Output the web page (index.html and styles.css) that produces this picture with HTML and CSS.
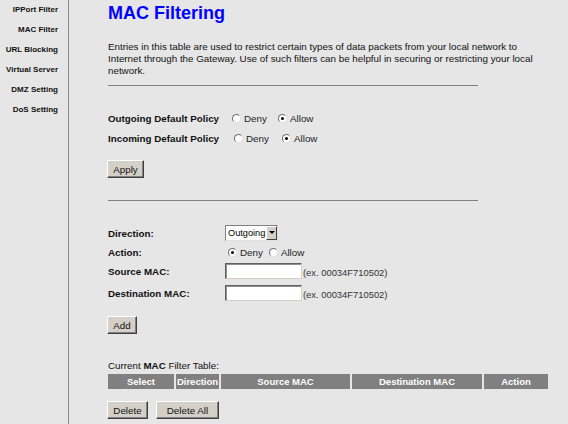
FILE: index.html
```html
<!DOCTYPE html>
<html>
<head>
<meta charset="utf-8">
<title>MAC Filtering</title>
<link rel="stylesheet" href="styles.css">
</head>
<body>
<div class="page">
  <nav class="sidebar">
    <a class="nav-item">IPPort Filter</a>
    <a class="nav-item">MAC Filter</a>
    <a class="nav-item">URL Blocking</a>
    <a class="nav-item">Virtual Server</a>
    <a class="nav-item">DMZ Setting</a>
    <a class="nav-item">DoS Setting</a>
  </nav>
  <main class="main">
    <h1 class="title">MAC Filtering</h1>
    <p class="intro">Entries in this table are used to restrict certain types of data packets from your local network to Internet through the Gateway. Use of such filters can be helpful in securing or restricting your local network.</p>
    <div class="rule"></div>

    <div class="policy">
      <div class="policy-row">
        <span class="label">Outgoing Default Policy</span>
        <label class="opt opt-deny"><input type="radio" name="out" class="radio">Deny</label>
        <label class="opt"><input type="radio" name="out" class="radio" checked>Allow</label>
      </div>
      <div class="policy-row">
        <span class="label">Incoming Default Policy</span>
        <label class="opt opt-deny opt-in"><input type="radio" name="in" class="radio">Deny</label>
        <label class="opt"><input type="radio" name="in" class="radio" checked>Allow</label>
      </div>
    </div>
    <button class="btn btn-apply">Apply</button>
    <div class="rule rule-2"></div>

    <div class="form">
      <div class="form-row r-dir">
        <span class="label">Direction:</span>
        <span class="select-wrap"><select class="select"><option>Outgoing</option><option>Incoming</option></select><span class="select-arrow"></span></span>
      </div>
      <div class="form-row r-act">
        <span class="label">Action:</span>
        <span class="act">
          <label class="opt2"><input type="radio" name="act" class="radio" checked>Deny</label>
          <label class="opt2"><input type="radio" name="act" class="radio">Allow</label>
        </span>
      </div>
      <div class="form-row r-src">
        <span class="label">Source MAC:</span>
        <span class="field"><input type="text" class="text-in"><span class="hint">(ex. 00034F710502)</span></span>
      </div>
      <div class="form-row r-dst">
        <span class="label">Destination MAC:</span>
        <span class="field"><input type="text" class="text-in"><span class="hint">(ex. 00034F710502)</span></span>
      </div>
    </div>
    <button class="btn btn-add">Add</button>

    <div class="table-title">Current <b>MAC</b> Filter Table:</div>
    <table class="filter-table">
      <thead>
        <tr>
          <th class="c-sel">Select</th>
          <th class="c-dir">Direction</th>
          <th class="c-src">Source MAC</th>
          <th class="c-dst">Destination MAC</th>
          <th class="c-act">Action</th>
        </tr>
      </thead>
    </table>
    <div class="actions">
      <button class="btn btn-del">Delete</button>
      <button class="btn btn-delall">Delete All</button>
    </div>
  </main>
</div>
</body>
</html>
```

FILE: styles.css
```css
html, body {
  margin: 0;
  padding: 0;
  background: #e6e6e6;
}
body {
  font-family: "Liberation Sans", Arial, sans-serif;
  color: #000;
  width: 568px;
  height: 424px;
  overflow: hidden;
}
.page {
  display: flex;
  height: 424px;
}
.sidebar {
  width: 68px;
  border-right: 1px solid #8a8a8a;
  display: flex;
  flex-direction: column;
  align-items: flex-end;
  padding-top: 4px;
  box-sizing: content-box;
}
.nav-item {
  display: block;
  font-size: 8px;
  font-weight: bold;
  line-height: 12px;
  height: 20px;
  padding-right: 10px;
  color: #111;
  white-space: nowrap;
}
.main {
  padding-left: 39px;
  padding-top: 2px;
  flex: 1;
}
.title {
  margin: 0;
  font-size: 18px;
  line-height: 22px;
  color: #0000ff;
  font-weight: bold;
}
.intro {
  margin: 17px 0 0 0;
  width: 430px;
  font-size: 9.8px;
  line-height: 12px;
  color: #111;
}
.rule {
  width: 370px;
  height: 1px;
  background: #808080;
  margin-top: 8px;
}
.policy {
  margin-top: 22px;
}
.policy-row {
  display: flex;
  align-items: center;
  height: 20px;
}
.label {
  font-weight: bold;
  font-size: 9.8px;
  color: #111;
  white-space: nowrap;
}
.policy-row .label {
  width: 124px;
}
.opt {
  display: inline-flex;
  align-items: center;
  font-size: 9.8px;
  color: #222;
}
.opt-deny {
  width: 46px;
}
.opt-in {
  margin-left: 2px;
  width: 48px;
}
.radio {
  appearance: none;
  -webkit-appearance: none;
  width: 9px;
  height: 9px;
  margin: 0 3px 0 0;
  border-radius: 50%;
  background: #fff;
  border: 1px solid #707070;
  border-right-color: #e0e0e0;
  border-bottom-color: #e0e0e0;
  box-sizing: border-box;
  position: relative;
}
.radio:checked::after {
  content: "";
  position: absolute;
  left: 2px;
  top: 2px;
  width: 3px;
  height: 3px;
  border-radius: 50%;
  background: #000;
}
.btn {
  font-family: "Liberation Sans", Arial, sans-serif;
  font-size: 9.8px;
  height: 18px;
  padding: 0 5px;
  background: #d4d0c8;
  color: #111;
  border: 1px solid;
  border-color: #fff #404040 #404040 #fff;
  box-shadow: inset -1px -1px 0 #808080;
  display: block;
}
.btn-apply {
  margin: 12px 0 0 -1px;
  width: 37px;
}
.rule-2 {
  margin-top: 22px;
}
.form {
  margin-top: 23px;
}
.form-row {
  display: flex;
  align-items: center;
  height: 18px;
}
.form-row .label {
  width: 117px;
}
.r-act { margin-top: 1px; }
.r-src { margin-top: 1px; }
.r-dst { margin-top: 4px; }
.select-wrap {
  position: relative;
  display: inline-block;
  height: 16px;
}
.select {
  appearance: none;
  -webkit-appearance: none;
  width: 53px;
  height: 16px;
  font-family: "Liberation Sans", Arial, sans-serif;
  font-size: 9.2px;
  padding: 0 0 0 2px;
  margin: 0;
  background: #fff;
  border: 1px solid;
  border-color: #808080 #e0e0e0 #e0e0e0 #808080;
  color: #000;
  display: block;
}
.select-arrow {
  position: absolute;
  right: 1px;
  top: 1px;
  width: 11px;
  height: 14px;
  background: #d4d0c8;
  border: 1px solid;
  border-color: #fff #404040 #404040 #fff;
  box-sizing: border-box;
}
.select-arrow::after {
  content: "";
  position: absolute;
  left: 2px;
  top: 4px;
  border-left: 3px solid transparent;
  border-right: 3px solid transparent;
  border-top: 3px solid #000;
}
.act {
  display: inline-flex;
  align-items: center;
  margin-left: 3px;
}
.opt2 {
  display: inline-flex;
  align-items: center;
  font-size: 9.8px;
  color: #222;
  margin-right: 6px;
}
.field {
  display: inline-flex;
  align-items: flex-end;
}
.text-in {
  width: 77px;
  height: 16px;
  box-sizing: border-box;
  margin: 0;
  padding: 0;
  background: #fff;
  border: 1px solid;
  border-color: #606060 #d4d0c8 #d4d0c8 #606060;
  box-shadow: inset 1px 1px 0 #909090;
}
.hint {
  font-size: 9.4px;
  color: #333;
  margin-left: 1px;
  line-height: 12px;
}
.btn-add {
  margin: 14px 0 0 -1px;
  width: 30px;
  padding: 0;
}
.table-title {
  margin-top: 26px;
  font-size: 9.8px;
  line-height: 12px;
  color: #111;
}
.table-title b {
  font-weight: bold;
}
.filter-table {
  border-collapse: separate;
  border-spacing: 2px 0;
  margin: 2px 0 0 -2px;
  width: 444px;
}
.filter-table th {
  background: #808080;
  color: #fff;
  font-size: 9.5px;
  font-weight: bold;
  height: 15px;
  padding: 0;
  text-align: center;
}
.c-sel { width: 66px; }
.c-dir { width: 43px; }
.c-src { width: 129px; }
.c-dst { width: 130px; }
.c-act { width: 64px; }
.actions {
  display: flex;
  gap: 8px;
  margin: 12px 0 0 -1px;
}
.btn-del { width: 41px; padding: 0; }
.btn-delall { width: 63px; padding: 0; }
```
